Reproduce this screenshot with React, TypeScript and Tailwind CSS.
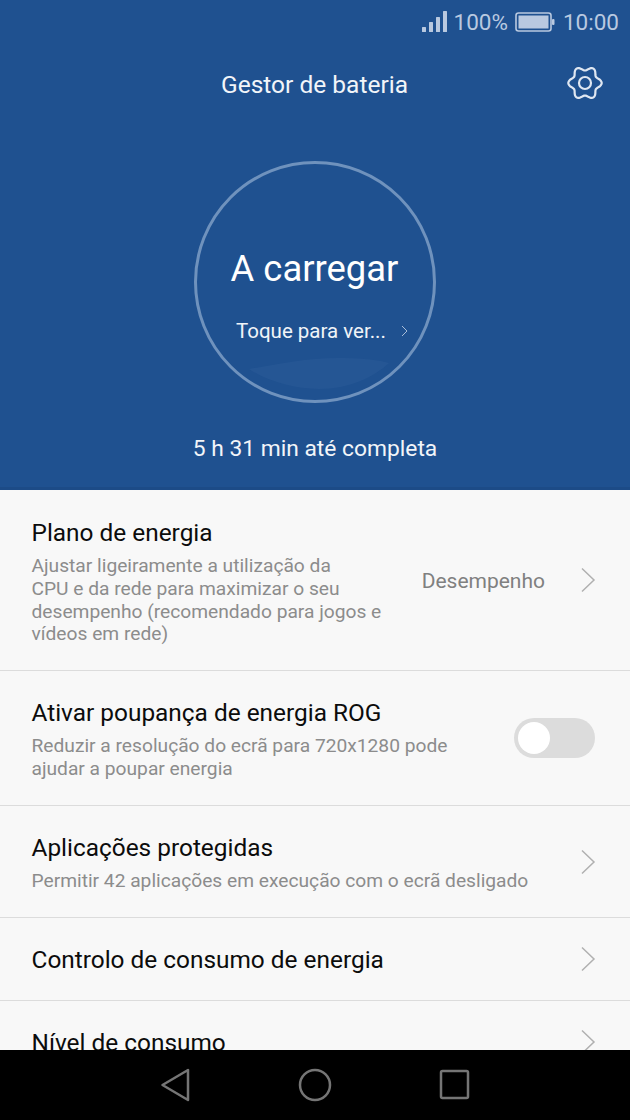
const font = { fontFamily: 'Roboto, sans-serif' };

// six soft lobes, same outline as the system settings gear
const gearPath =
  Array.from({ length: 96 }, (_, i) => {
    const a = (i / 96) * Math.PI * 2;
    const r = 14.6 + 2.1 * Math.cos(6 * a);
    return `${i === 0 ? 'M' : 'L'}${(19 + r * Math.cos(a)).toFixed(2)} ${(18 + r * Math.sin(a)).toFixed(2)}`;
  }).join(' ') + ' Z';

function Chevron() {
  return (
    <svg width="16" height="26" viewBox="0 0 16 26" fill="none" stroke="#b0b0b0" strokeWidth="1.5" className="shrink-0">
      <path d="M2 1.5 L14 13 L2 24.5" />
    </svg>
  );
}

function StatusBar() {
  return (
    <div className="flex h-[44px] items-center justify-end pr-[11px] text-[22.5px] leading-none text-[#b9c9e0]">
      <svg width="26" height="22" viewBox="0 0 26 22" fill="#b9c9e0" className="mr-[6px] mb-[1px]">
        <rect x="0" y="16" width="4" height="5" rx="0.5" />
        <rect x="7" y="11" width="4" height="10" rx="0.5" />
        <rect x="14" y="6" width="4" height="15" rx="0.5" />
        <rect x="21" y="0" width="4" height="21" rx="0.5" />
      </svg>
      <span>100%</span>
      <svg width="41" height="22" viewBox="0 0 41 22" fill="none" className="ml-[7px]">
        <rect x="1" y="2" width="35" height="18" rx="2.5" stroke="#b9c9e0" strokeWidth="1.6" />
        <rect x="3.5" y="4.5" width="30" height="13" fill="#b9c9e0" />
        <rect x="37" y="8" width="2.5" height="6" rx="1" fill="#b9c9e0" />
      </svg>
      <span className="ml-[7px]">10:00</span>
    </div>
  );
}

function Gear() {
  return (
    <svg width="38" height="36" viewBox="0 0 38 36" fill="none" stroke="#dfe7f2" strokeWidth="2.2">
      <path d={gearPath} strokeLinejoin="round" />
      <circle cx="19" cy="18" r="6" />
    </svg>
  );
}

function Hero() {
  return (
    <div className="h-[490px] border-b-[3px] border-[#1c4b87] bg-[#1f5190]">
      <StatusBar />
      <div className="relative flex h-[82px] items-center justify-center pr-[1px]">
        <span className="text-[24.5px] text-[#f2f5f9]">Gestor de bateria</span>
        <div className="absolute right-[26px] top-[21px]">
          <Gear />
        </div>
      </div>
      <div className="mx-auto mt-[35px] flex h-[242px] w-[242px] flex-col items-center overflow-hidden rounded-full border-[3px] border-[#6f92bd]">
        <div className="mt-[81px] pr-[1px] text-[36.4px] leading-[48px] text-white">A carregar</div>
        <div className="mt-[24px] flex w-full items-center pl-[39px] text-[20.5px] leading-[28px] text-[#f0f4f8]">
          <span>Toque para ver...</span>
          <svg width="7" height="12" viewBox="0 0 7 12" fill="none" stroke="#a9bdd8" strokeWidth="1" className="ml-[15px]">
            <path d="M1 1 L6 6 L1 11" />
          </svg>
        </div>
        <svg width="140" height="34" viewBox="0 0 140 34" className="mt-[12px] ml-[8px]" fill="#3a6aa2" fillOpacity="0.22">
          <path d="M0 12 C30 7 60 0 95 1 C115 1.5 130 3 140 6 C125 20 100 32 70 32 C45 32 18 24 0 12 Z" />
        </svg>
      </div>
      <div className="mt-[31px] text-center text-[22.8px] leading-[30px] text-[#f2f5f9]">5 h 31 min até completa</div>
    </div>
  );
}

function Row({ title, sub, height, offset, children }: { title: string; sub?: string[]; height: string; offset: string; children?: React.ReactNode }) {
  return (
    <div className={`flex items-center justify-between border-b border-[#dcdcdc] pl-[31.5px] pr-[34px] ${height}`}>
      <div className={offset}>
        <div className="text-[24.4px] leading-[32px] text-[#0c0c0c]">{title}</div>
        {sub && (
          <div className="mt-[6px] text-[19.2px] leading-[22.7px] text-[#8c8c8c]">
            {sub.map((line) => (
              <div key={line} className="whitespace-nowrap">{line}</div>
            ))}
          </div>
        )}
      </div>
      {children}
    </div>
  );
}

export default function App() {
  return (
    <div className="flex h-[1120px] w-[630px] flex-col overflow-hidden bg-black" style={font}>
      <Hero />
      <div className="h-[560px] overflow-hidden bg-[#f8f8f8]">
        <Row
          height="h-[181px]"
          offset="pt-[3px]"
          title="Plano de energia"
          sub={[
            'Ajustar ligeiramente a utilização da',
            'CPU e da rede para maximizar o seu',
            'desempenho (recomendado para jogos e',
            'vídeos em rede)',
          ]}
        >
          <div className="flex items-center">
            <span className="mr-[35px] mt-[3px] text-[21px] text-[#808080]">Desempenho</span>
            <Chevron />
          </div>
        </Row>
        <Row
          height="h-[135px]"
          offset="pt-[2px]"
          title="Ativar poupança de energia ROG"
          sub={['Reduzir a resolução do ecrã para 720x1280 pode', 'ajudar a poupar energia']}
        >
          <div className="mr-[1px] flex h-[40px] w-[81px] items-center rounded-full bg-[#dcdcdc] pl-[4px]">
            <div className="h-[32px] w-[32px] rounded-full bg-white" />
          </div>
        </Row>
        <Row height="h-[112px]" offset="pt-[2px]" title="Aplicações protegidas" sub={['Permitir 42 aplicações em execução com o ecrã desligado']}>
          <Chevron />
        </Row>
        <Row height="h-[83px]" offset="pt-[2px]" title="Controlo de consumo de energia">
          <Chevron />
        </Row>
        <Row height="h-[83px]" offset="pt-[2px]" title="Nível de consumo">
          <Chevron />
        </Row>
      </div>
      <div className="flex h-[70px] items-center bg-black pl-[160px]">
        <svg width="320" height="36" viewBox="0 0 320 36" fill="none" stroke="#757575" strokeWidth="2.5" strokeLinejoin="round">
          <path d="M2.5 18 L28 3 L28 33 Z" />
          <circle cx="155" cy="18" r="15" />
          <rect x="281" y="4" width="27" height="27" rx="1.5" />
        </svg>
      </div>
    </div>
  );
}
